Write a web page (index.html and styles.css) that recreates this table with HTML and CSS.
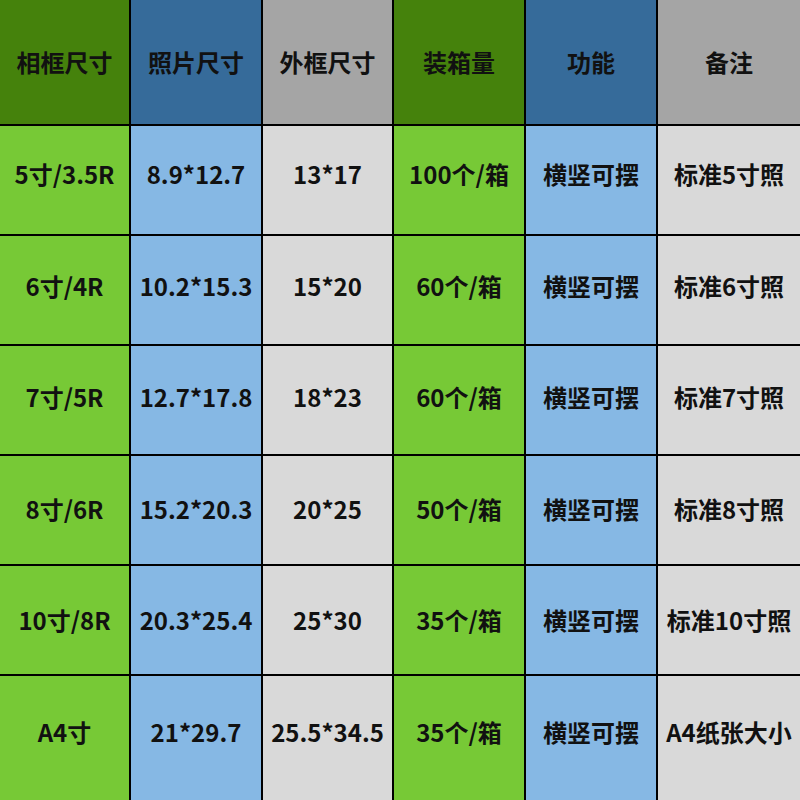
FILE: index.html
```html
<!DOCTYPE html>
<html lang="zh">
<head>
<meta charset="utf-8">
<link rel="stylesheet" href="styles.css">
</head>
<body>
<div class="table">
  <div class="cell head hg">相框尺寸</div>
  <div class="cell head hb">照片尺寸</div>
  <div class="cell head hy">外框尺寸</div>
  <div class="cell head hg">装箱量</div>
  <div class="cell head hb">功能</div>
  <div class="cell head hy">备注</div>

  <div class="cell r1 g">5寸/3.5R</div>
  <div class="cell r1 b">8.9*12.7</div>
  <div class="cell r1 y">13*17</div>
  <div class="cell r1 g">100个/箱</div>
  <div class="cell r1 b">横竖可摆</div>
  <div class="cell r1 y">标准5寸照</div>

  <div class="cell r2 g">6寸/4R</div>
  <div class="cell r2 b">10.2*15.3</div>
  <div class="cell r2 y">15*20</div>
  <div class="cell r2 g">60个/箱</div>
  <div class="cell r2 b">横竖可摆</div>
  <div class="cell r2 y">标准6寸照</div>

  <div class="cell r3 g">7寸/5R</div>
  <div class="cell r3 b">12.7*17.8</div>
  <div class="cell r3 y">18*23</div>
  <div class="cell r3 g">60个/箱</div>
  <div class="cell r3 b">横竖可摆</div>
  <div class="cell r3 y">标准7寸照</div>

  <div class="cell r4 g">8寸/6R</div>
  <div class="cell r4 b">15.2*20.3</div>
  <div class="cell r4 y">20*25</div>
  <div class="cell r4 g">50个/箱</div>
  <div class="cell r4 b">横竖可摆</div>
  <div class="cell r4 y">标准8寸照</div>

  <div class="cell r5 g">10寸/8R</div>
  <div class="cell r5 b">20.3*25.4</div>
  <div class="cell r5 y">25*30</div>
  <div class="cell r5 g">35个/箱</div>
  <div class="cell r5 b">横竖可摆</div>
  <div class="cell r5 y">标准10寸照</div>

  <div class="cell r6 g">A4寸</div>
  <div class="cell r6 b">21*29.7</div>
  <div class="cell r6 y">25.5*34.5</div>
  <div class="cell r6 g">35个/箱</div>
  <div class="cell r6 b">横竖可摆</div>
  <div class="cell r6 y">A4纸张大小</div>
</div>
</body>
</html>
```

FILE: styles.css
```css
html, body {
  margin: 0;
  padding: 0;
  width: 800px;
  height: 800px;
  overflow: hidden;
  background: #000;
}
.table {
  display: grid;
  width: 800px;
  height: 800px;
  grid-template-columns: 129px 130px 129px 130px 130px 1fr;
  grid-template-rows: 124px repeat(5, 108px) 1fr;
  column-gap: 2px;
  row-gap: 2px;
  background: #000;
  font-family: "Noto Sans CJK SC", "Noto Sans", sans-serif;
  font-weight: 700;
  font-size: 24px;
  color: #111;
}
.cell {
  display: flex;
  align-items: center;
  justify-content: center;
  white-space: nowrap;
  box-sizing: border-box;
}
.head { padding-bottom: 2px; }
.r1 { padding-bottom: 14px; }
.r2 { padding-bottom: 10px; }
.r3 { padding-bottom: 8px; }
.r4 { padding-bottom: 4px; }
.r5 { padding-bottom: 2px; }
.r6 { padding-bottom: 14px; }
.hg { background: #45820c; }
.hb { background: #366b9a; }
.hy { background: #a5a5a5; }
.g { background: #77c936; }
.b { background: #86b8e4; }
.y { background: #d9d9d9; }
```
